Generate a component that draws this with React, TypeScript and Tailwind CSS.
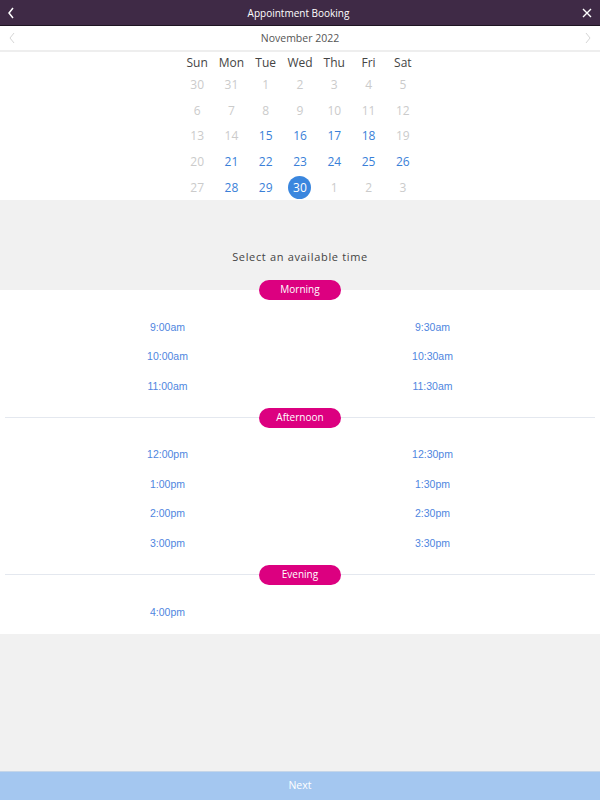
import React from "react";

const font = { fontFamily: '"Open Sans", "Noto Sans", sans-serif' };
const arial = { fontFamily: '"Liberation Sans", Arial, sans-serif' };

type Cell = { d: number; on?: boolean; sel?: boolean };
const weeks: Cell[][] = [
  [{ d: 30 }, { d: 31 }, { d: 1 }, { d: 2 }, { d: 3 }, { d: 4 }, { d: 5 }],
  [{ d: 6 }, { d: 7 }, { d: 8 }, { d: 9 }, { d: 10 }, { d: 11 }, { d: 12 }],
  [{ d: 13 }, { d: 14 }, { d: 15, on: true }, { d: 16, on: true }, { d: 17, on: true }, { d: 18, on: true }, { d: 19 }],
  [{ d: 20 }, { d: 21, on: true }, { d: 22, on: true }, { d: 23, on: true }, { d: 24, on: true }, { d: 25, on: true }, { d: 26, on: true }],
  [{ d: 27 }, { d: 28, on: true }, { d: 29, on: true }, { d: 30, sel: true }, { d: 1 }, { d: 2 }, { d: 3 }],
];
const days = ["Sun", "Mon", "Tue", "Wed", "Thu", "Fri", "Sat"];

const groups = [
  { name: "Morning", slots: ["9:00am", "9:30am", "10:00am", "10:30am", "11:00am", "11:30am"], line: false },
  { name: "Afternoon", slots: ["12:00pm", "12:30pm", "1:00pm", "1:30pm", "2:00pm", "2:30pm", "3:00pm", "3:30pm"], line: true },
  { name: "Evening", slots: ["4:00pm"], line: true },
];

export default function App() {
  return (
    <div className="w-[600px] h-[800px] flex flex-col bg-[#f1f1f1]" style={font}>
      <div className="h-[26px] bg-[#3f2a46] border-b border-[#1e1422] flex items-center justify-between px-[5px] text-white">
        <svg width="10" height="14" viewBox="0 0 10 14" className="ml-[1px]">
          <path d="M7 2 L3 7 L7 12" stroke="white" strokeWidth="1.5" fill="none" />
        </svg>
        <span className="text-[10px] pt-[1px]">Appointment Booking</span>
        <svg width="12" height="12" viewBox="0 0 12 12" className="mr-[2px]">
          <path d="M2 2 L10 10 M10 2 L2 10" stroke="white" strokeWidth="1.4" />
        </svg>
      </div>
      <div className="h-[26px] bg-white border-b-2 border-[#eeeeee] flex items-center justify-between px-[8px]">
        <svg width="8" height="12" viewBox="0 0 8 12">
          <path d="M6 1 L2 6 L6 11" stroke="#d6d6d6" strokeWidth="1" fill="none" />
        </svg>
        <span className="text-[10.5px] text-[#555] pt-[1px]">November 2022</span>
        <svg width="8" height="12" viewBox="0 0 8 12">
          <path d="M2 1 L6 6 L2 11" stroke="#d6d6d6" strokeWidth="1" fill="none" />
        </svg>
      </div>
      <div className="bg-white flex justify-center">
        <div className="w-[240px]">
          <div className="grid grid-cols-7 h-[20px] items-center text-center text-[12px] text-[#444] pt-[1px]">
            {days.map((d) => (
              <span key={d}>{d}</span>
            ))}
          </div>
          {weeks.map((w, i) => (
            <div key={i} className="grid grid-cols-7 h-[25.6px] items-center text-center text-[12px] pt-[1px]">
              {w.map((c, j) => (
                <div key={j} className="flex justify-center">
                  {c.sel ? (
                    <span className="w-[23px] h-[23px] rounded-full bg-[#3a86de] text-white flex items-center justify-center">
                      {c.d}
                    </span>
                  ) : (
                    <span className={c.on ? "text-[#3a7fd8]" : "text-[#cbcbcb]"}>{c.d}</span>
                  )}
                </div>
              ))}
            </div>
          ))}
        </div>
      </div>
      <div className="h-[90px] flex items-end justify-center pb-[24px]">
        <span className="text-[11px] tracking-[0.06em] text-[#444]">Select an available time</span>
      </div>
      <div className="bg-white pb-[7px]">
        {groups.map((g) => (
          <div key={g.name}>
            <div className={"relative h-[20px] flex items-center justify-center " + (g.name === "Morning" ? "-mt-[10px]" : "mt-[7px]")}>
              {g.line && <div className="absolute left-[5px] right-[5px] top-[9px] h-px bg-[#e4e8ef]" />}
              <span className="relative w-[82px] h-[20px] rounded-full bg-[#dc0080] text-white text-[10px] flex items-center justify-center">
                {g.name}
              </span>
            </div>
            <div className="grid grid-cols-2 px-[35px] mt-[12.5px]" style={arial}>
              {g.slots.map((s) => (
                <div key={s} className="h-[29.4px] flex items-center justify-center text-[10.5px] text-[#4f86e0] pt-[1px]">
                  {s}
                </div>
              ))}
            </div>
          </div>
        ))}
      </div>
      <div className="flex-1" />
      <div className="h-[29px] bg-[#a4c7f0] border-t border-[#c6d6e8] flex items-center justify-center text-white text-[10.5px]">
        Next
      </div>
    </div>
  );
}
